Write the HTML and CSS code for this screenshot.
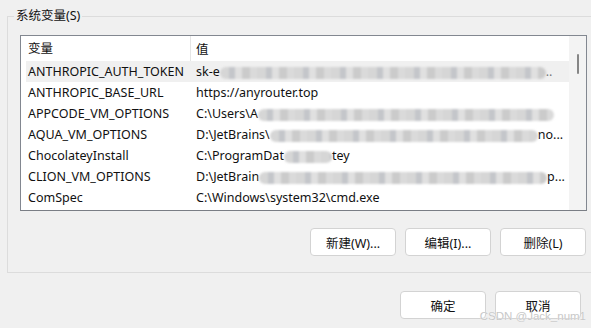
FILE: index.html
```html
<!DOCTYPE html>
<html>
  <head>
    <meta charset="utf-8" />
    <title>环境变量</title>
    <link rel="stylesheet" href="styles.css">
  </head>
  <body>
    <div class="group">
      <span class="group-title">系统变量(S)</span>
      <div class="listbox">
        <div class="list-main">
          <div class="list-head">
            <div class="col-name">变量</div>
            <div class="col-value">值</div>
          </div>
          <div class="row selected">
            <div class="col-name">ANTHROPIC_AUTH_TOKEN</div>
            <div class="col-value">sk-e<span class="blur" style="width: 326px"></span><span class="faint">..</span></div>
          </div>
          <div class="row">
            <div class="col-name">ANTHROPIC_BASE_URL</div>
            <div class="col-value">https://anyrouter.top</div>
          </div>
          <div class="row">
            <div class="col-name">APPCODE_VM_OPTIONS</div>
            <div class="col-value">C:\Users\A<span class="blur" style="width: 296px"></span></div>
          </div>
          <div class="row">
            <div class="col-name">AQUA_VM_OPTIONS</div>
            <div class="col-value">D:\JetBrains\<span class="blur" style="width: 268px"></span>no...</div>
          </div>
          <div class="row">
            <div class="col-name">ChocolateyInstall</div>
            <div class="col-value">C:\ProgramDat<span class="blur" style="width: 48px"></span>tey</div>
          </div>
          <div class="row">
            <div class="col-name">CLION_VM_OPTIONS</div>
            <div class="col-value">D:\JetBrain<span class="blur" style="width: 288px"></span>p...</div>
          </div>
          <div class="row">
            <div class="col-name">ComSpec</div>
            <div class="col-value">C:\Windows\system32\cmd.exe</div>
          </div>
        </div>
        <div class="scrollbar">
          <div class="thumb"></div>
        </div>
      </div>
      <div class="group-actions">
        <button class="btn">新建(W)...</button>
        <button class="btn">编辑(I)...</button>
        <button class="btn">删除(L)</button>
      </div>
    </div>
    <div class="dialog-actions">
      <button class="btn">确定</button>
      <button class="btn">取消</button>
    </div>
    <div class="watermark">CSDN @Jack_num1</div>
  </body>
</html>
```

FILE: styles.css
```css
body {
  margin: 0;
  width: 591px;
  height: 328px;
  overflow: hidden;
  background-color: #f0f0f0;
  font-family: "Noto Sans", "Noto Sans CJK SC", sans-serif;
  font-size: 12.5px;
  color: #111;
  position: relative;
}
.group {
  margin: 16px -20px 0 7px;
  border: 1px solid #dcdcdc;
  padding: 18px 0 16px 12px;
  position: relative;
}
.group-title {
  position: absolute;
  top: -9px;
  left: 6px;
  padding: 0 2px;
  background-color: #f0f0f0;
  line-height: 16px;
}
.listbox {
  width: 565px;
  height: 174px;
  border: 1px solid #828790;
  border-bottom-color: #7a7e85;
  background-color: white;
  display: flex;
  overflow: hidden;
}
.list-main {
  flex-grow: 1;
  overflow: hidden;
}
.list-head {
  display: flex;
  height: 25px;
  align-items: center;
}
.list-head .col-name {
  width: 162px;
  padding-left: 7px;
  border-right: 1px solid #e5e5e5;
  height: 25px;
  line-height: 25px;
}
.list-head .col-value {
  padding-left: 5px;
}
.row {
  display: flex;
  height: 21px;
  line-height: 21px;
  margin-left: 5px;
  white-space: nowrap;
}
.row.selected {
  background-color: #f0f0f0;
}
.row .col-name {
  width: 162px;
  padding-left: 2px;
  flex-shrink: 0;
}
.row .col-value {
  padding-left: 6px;
  display: flex;
  align-items: center;
}
.blur {
  display: inline-block;
  height: 12px;
  margin-top: 2px;
  border-radius: 6px;
  background: repeating-linear-gradient(90deg, #d6d6d6 0 9px, #c4c6ca 9px 15px, #e0e0e0 15px 22px, #cbcbcb 22px 30px, #dadada 30px 37px);
  filter: blur(1.2px);
}
.faint {
  color: #777;
}
.scrollbar {
  width: 17px;
  flex-shrink: 0;
  background-color: #f3f3f3;
  position: relative;
}
.thumb {
  position: absolute;
  left: 8px;
  top: 18px;
  width: 2px;
  height: 20px;
  background-color: #868686;
  border-radius: 1px;
}
.group-actions {
  display: flex;
  justify-content: flex-end;
  gap: 9px;
  margin-top: 17px;
  padding-right: 24px;
}
.btn {
  width: 86px;
  height: 28px;
  background-color: white;
  border: 1px solid #d3d3d3;
  border-radius: 4px;
  font-family: "Noto Sans", "Noto Sans CJK SC", sans-serif;
  font-size: 12.5px;
  color: #111;
  padding: 0;
}
.dialog-actions {
  display: flex;
  justify-content: flex-end;
  gap: 9px;
  margin-top: 18px;
  padding-right: 10px;
}
.watermark {
  position: absolute;
  right: 5px;
  bottom: 6px;
  font-family: "Liberation Sans", sans-serif;
  font-size: 11.5px;
  line-height: 12px;
  color: #c8c8c8;
  text-shadow: 0 0 1px white;
}
```
